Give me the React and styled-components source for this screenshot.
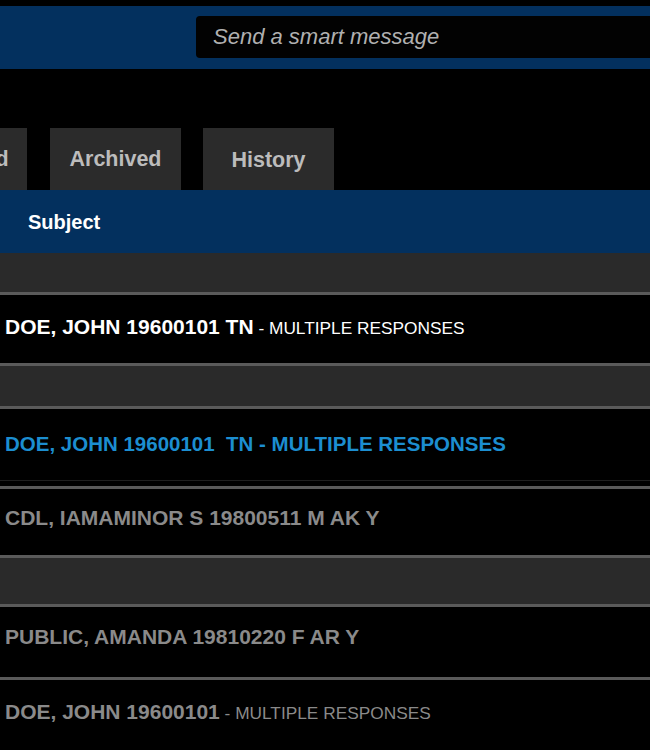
import React from "react";
import styled, { createGlobalStyle } from "styled-components";

const COLOR = {
  NAVY: "#03305e",
  PANEL: "#2a2a2a",
  RULE: "#5a5a5a",
  DARKRULE: "#1f1f1f",
  TAB: "#2b2b2b",
  TABTEXT: "#bcbcbc",
  MUTED: "#8a8a8a",
  LINK: "#1c8ed0",
};

const rows = [
  { type: "group", height: 39, first: true },
  { type: "item", height: 68, pad: 20, tone: "white", name: "DOE, JOHN 19600101 TN", note: "MULTIPLE RESPONSES" },
  { type: "group", height: 40 },
  { type: "item", height: 71, pad: 23, tone: "link", name: "DOE, JOHN 19600101\u00a0\u00a0TN - MULTIPLE RESPONSES", split: true },
  { type: "item", height: 66, pad: 17, tone: "muted", name: "CDL, IAMAMINOR S 19800511 M AK Y" },
  { type: "group", height: 46 },
  { type: "item", height: 70, pad: 18, tone: "muted", name: "PUBLIC, AMANDA 19810220 F AR Y" },
  { type: "item", height: 72, pad: 20, tone: "muted", name: "DOE, JOHN 19600101", note: "MULTIPLE RESPONSES" },
];

function App() {
  return (
    <>
      <GlobalStyle />
      <Page>
        <TopBar>
          <SmartInput placeholder="Send a smart message" />
        </TopBar>
        <Tabs>
          <Tab cut>Received</Tab>
          <Tab>Archived</Tab>
          <Tab low>History</Tab>
        </Tabs>
        <HeaderBar>
          <HeaderCell>Subject</HeaderCell>
        </HeaderBar>
        <List>
          {rows.map((row, index) =>
            row.type === "group" ? (
              <GroupRow key={index} height={row.height} first={row.first} />
            ) : (
              <ItemRow key={index} height={row.height} pad={row.pad} split={row.split}>
                <Name tone={row.tone}>{row.name}</Name>
                {row.note && <Note tone={row.tone}>&nbsp;- {row.note}</Note>}
              </ItemRow>
            )
          )}
        </List>
      </Page>
    </>
  );
}

export default App;

const GlobalStyle = createGlobalStyle`
  html, body {
    margin: 0;
    padding: 0;
    background: #000;
    overflow: hidden;
  }
  * {
    box-sizing: border-box;
  }
`;

const Page = styled.div`
  width: 650px;
  height: 750px;
  overflow: hidden;
  background: #000;
  padding-top: 6px;
  font-family: "Liberation Sans", Arial, sans-serif;
`;

const TopBar = styled.div`
  height: 63px;
  background: ${COLOR.NAVY};
  padding: 10px 0 0 196px;
`;

const SmartInput = styled.input`
  display: block;
  width: 520px;
  height: 42px;
  border: none;
  border-radius: 4px;
  background: #020202;
  padding: 0 0 0 17px;
  font-family: "Liberation Sans", Arial, sans-serif;
  font-style: italic;
  font-size: 22px;
  color: #ccc;
  outline: none;

  &::placeholder {
    color: #b0b0b0;
  }
`;

const Tabs = styled.div`
  display: flex;
  gap: 22px;
  margin-top: 59px;
  margin-left: -104px;
  height: 62px;
`;

const Tab = styled.div`
  width: 131px;
  flex: none;
  display: flex;
  align-items: center;
  justify-content: center;
  padding-top: ${(p) => (p.low ? "3px" : "0")};
  background: ${COLOR.TAB};
  color: ${COLOR.TABTEXT};
  font-weight: bold;
  font-size: 21.5px;
  margin-right: ${(p) => (p.cut ? "1px" : "0")};
`;

const HeaderBar = styled.div`
  height: 63px;
  background: ${COLOR.NAVY};
  display: flex;
  align-items: center;
  padding: 2px 0 0 28px;
`;

const HeaderCell = styled.div`
  color: #fff;
  font-weight: bold;
  font-size: 20px;
`;

const List = styled.div`
  display: flex;
  flex-direction: column;
`;

const GroupRow = styled.div`
  height: ${(p) => p.height + (p.first ? 0 : 3)}px;
  background: ${COLOR.PANEL};
  border-top: ${(p) => (p.first ? "none" : `3px solid ${COLOR.RULE}`)};
`;

const ItemRow = styled.div`
  height: ${(p) => p.height + 3 + (p.split ? 1 : 0)}px;
  background: #000;
  border-top: 3px solid ${COLOR.RULE};
  border-bottom: ${(p) => (p.split ? `1px solid ${COLOR.DARKRULE}` : "none")};
  padding: ${(p) => p.pad}px 0 0 5px;
  display: flex;
  align-items: baseline;
  white-space: nowrap;
  margin-bottom: ${(p) => (p.split ? "5px" : "0")};
`;

const toneColor = (tone) =>
  tone === "white" ? "#fff" : tone === "link" ? COLOR.LINK : COLOR.MUTED;

const Name = styled.span`
  color: ${(p) => toneColor(p.tone)};
  font-weight: bold;
  font-size: ${(p) => (p.tone === "link" ? "20.5px" : "21px")};
  line-height: 24px;
`;

const Note = styled.span`
  color: ${(p) => toneColor(p.tone)};
  font-size: 17.3px;
  line-height: 24px;
`;
